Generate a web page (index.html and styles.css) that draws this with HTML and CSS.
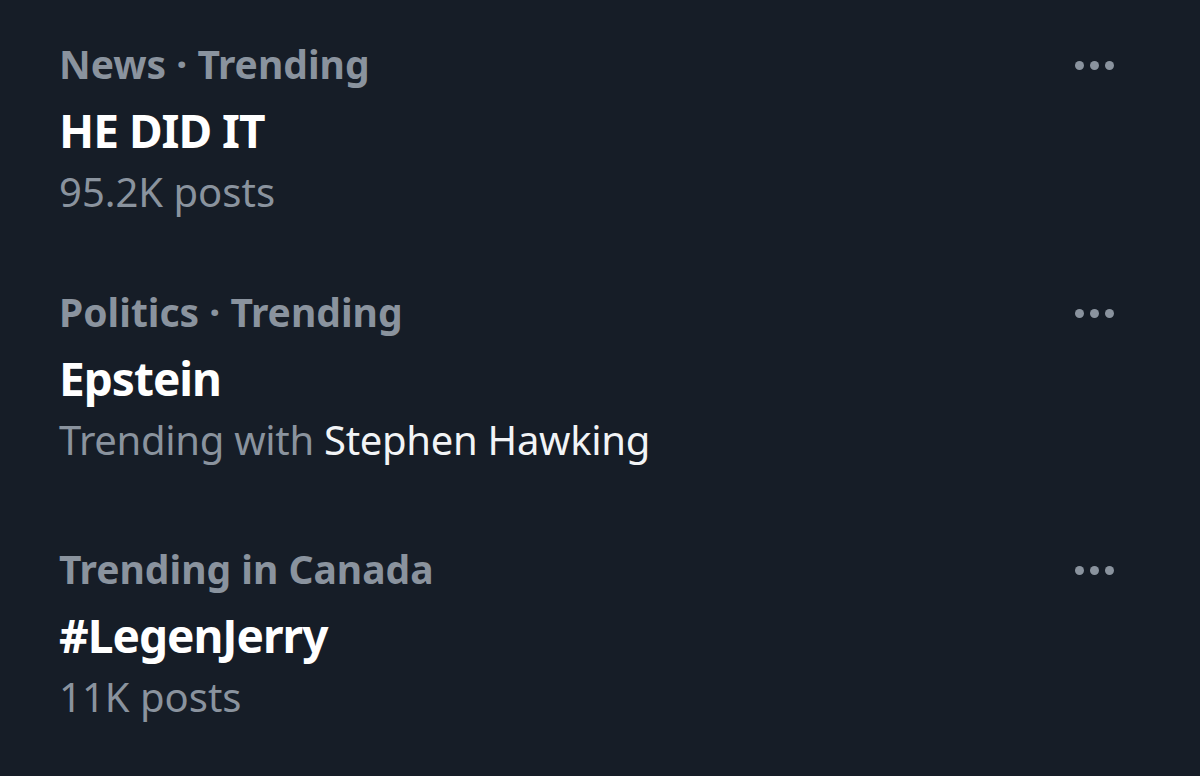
FILE: index.html
```html
<!DOCTYPE html>
<html>
<head>
<meta charset="utf-8">
<link rel="stylesheet" href="styles.css">
</head>
<body>
<div class="list">
  <div class="trend">
    <div class="text">
      <div class="meta">News · Trending</div>
      <div class="title">HE DID IT</div>
      <div class="sub">95.2K posts</div>
    </div>
    <div class="more"><span></span><span></span><span></span></div>
  </div>
  <div class="trend trend-with">
    <div class="text">
      <div class="meta">Politics · Trending</div>
      <div class="title">Epstein</div>
      <div class="sub">Trending with <span class="hl">Stephen Hawking</span></div>
    </div>
    <div class="more"><span></span><span></span><span></span></div>
  </div>
  <div class="trend">
    <div class="text">
      <div class="meta">Trending in Canada</div>
      <div class="title">#LegenJerry</div>
      <div class="sub">11K posts</div>
    </div>
    <div class="more"><span></span><span></span><span></span></div>
  </div>
</div>
</body>
</html>
```
FILE: styles.css
```css
html, body {
  margin: 0;
  padding: 0;
  background: #161d27;
  width: 1200px;
  height: 776px;
  overflow: hidden;
}
body {
  font-family: "Noto Sans", "Open Sans", sans-serif;
}
.list {
  display: flex;
  flex-direction: column;
  gap: 60px;
  padding: 32px 0 0 59px;
}
.trend {
  display: flex;
  align-items: flex-start;
  justify-content: space-between;
  padding-right: 86px;
}
.trend-with {
  margin-bottom: 9px;
}
.meta {
  color: #8a939e;
  font-weight: 700;
  font-size: 39px;
  line-height: 64px;
}
.title {
  color: #ffffff;
  font-weight: 700;
  font-size: 46px;
  letter-spacing: -1px;
  line-height: 68px;
}
.sub {
  color: #8a939e;
  font-weight: 400;
  font-size: 40px;
  line-height: 56px;
}
.trend-with .sub {
  letter-spacing: -0.3px;
}
.hl {
  color: #f2f4f6;
}
.more {
  display: flex;
  gap: 6px;
  margin-top: 29px;
}
.more span {
  width: 9px;
  height: 9px;
  border-radius: 50%;
  background: #8a939e;
}
```
